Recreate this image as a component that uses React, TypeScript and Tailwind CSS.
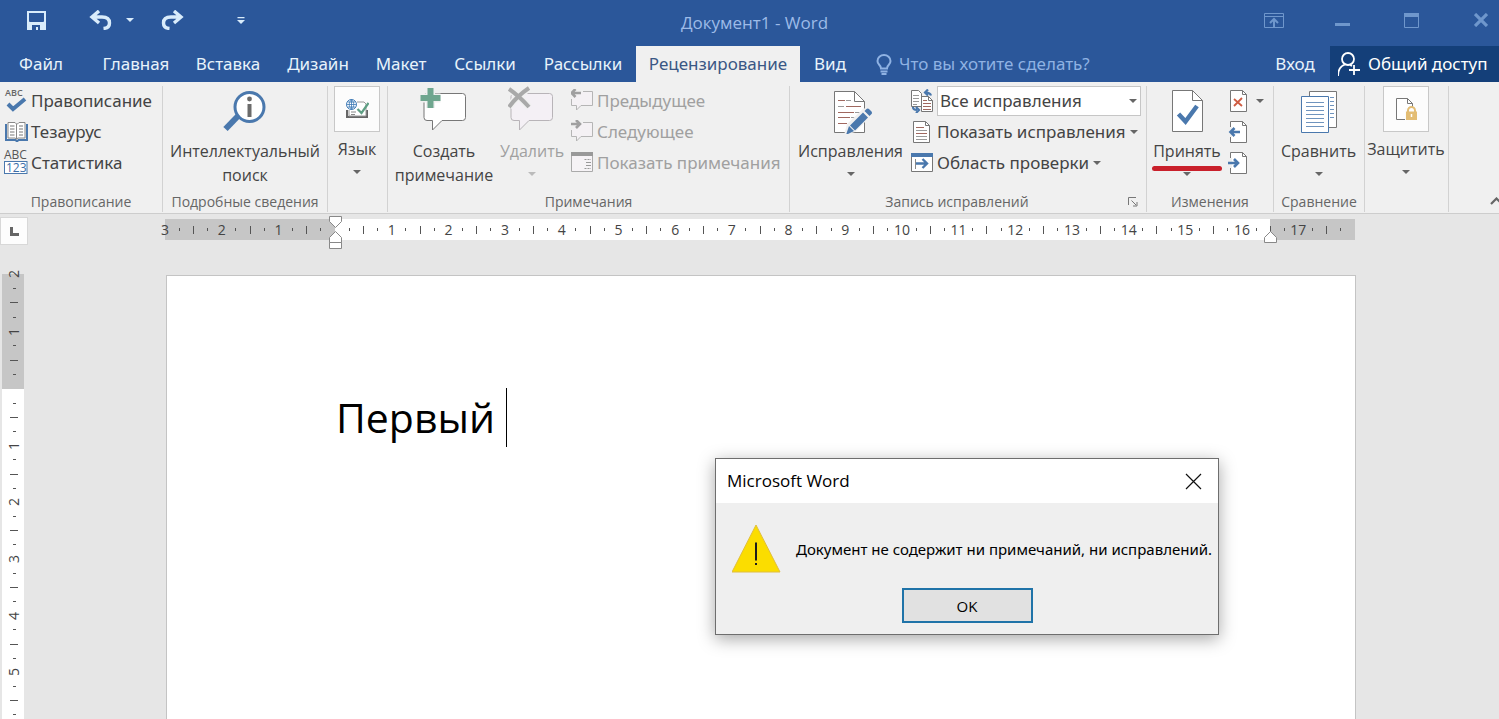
import type { ReactNode } from 'react';

/* ---------- shared pieces ---------- */

function Caret({ className = 'text-[#666]' }: { className?: string }) {
  return (
    <svg width="8" height="4" viewBox="0 0 8 4" className={`shrink-0 ${className}`} aria-hidden="true">
      <path d="M0 0h8L4 4z" fill="currentColor" />
    </svg>
  );
}

function Group({ label, width, children, launcher }: { label?: string; width: string; children: ReactNode; launcher?: boolean }) {
  return (
    <section className={`flex shrink-0 flex-col pt-1 ${width}`}>
      <div className="flex h-[126px] flex-col border-r border-[#d2d2d2]">
        <div className="flex h-[106px] shrink-0">{children}</div>
        <div className="flex h-5 items-center justify-center text-[14px] leading-5 whitespace-nowrap text-[#666]">
          <h2 className={launcher ? 'flex-1 pr-1 text-center' : 'flex-1 text-center'}>{label}</h2>
          {launcher && (
            <button aria-label="Параметры" className="w-[18px]">
              <svg width="10" height="10" viewBox="0 0 10 10" fill="none" stroke="#777">
                <path d="M.5 8V.5H8M3.500 3.500 8 8M9 5v4H5" />
              </svg>
            </button>
          )}
        </div>
      </div>
    </section>
  );
}

function BigButton({ icon, lines, width, muted, caret }: { icon: ReactNode; lines: string[]; width: string; muted?: boolean; caret?: boolean }) {
  return (
    <button disabled={muted} className={`flex shrink-0 flex-col items-center text-base leading-6 whitespace-nowrap ${width} ${muted ? 'text-[#a0a0a0]' : 'text-[#444]'}`}>
      <span className="flex h-[53px] shrink-0 items-start justify-center">{icon}</span>
      {lines.map((l) => (
        <span key={l}>{l}</span>
      ))}
      {caret && <Caret className={muted ? 'mt-[9px] text-[#bbb]' : 'mt-[9px] text-[#666]'} />}
    </button>
  );
}

function BoxedButton({ icon, text, width }: { icon: ReactNode; text: string; width: string }) {
  return (
    <button className={`flex shrink-0 flex-col items-center text-base leading-6 whitespace-nowrap text-[#444] ${width}`}>
      <span className="flex size-[46px] shrink-0 items-center justify-center border border-[#c8c8c8] bg-[#fcfcfc]">{icon}</span>
      <span className="mt-[5px]">{text}</span>
      <Caret className="mt-[9px] text-[#666]" />
    </button>
  );
}

function SmallButton({ icon, text, muted, caret }: { icon: ReactNode; text: string; muted?: boolean; caret?: boolean }) {
  return (
    <button disabled={muted} className={`flex h-[31px] items-center font-['Noto_Sans',sans-serif] text-[17px] leading-6 whitespace-nowrap ${muted ? 'text-[#a0a0a0]' : 'text-[#444]'}`}>
      <span className="flex w-[26px] shrink-0">{icon}</span>
      <span>{text}</span>
      {caret && <Caret className="ml-1 text-[#666]" />}
    </button>
  );
}

/* ---------- icons ---------- */

const SpellIcon = () => (
  <svg width="24" height="26" viewBox="0 0 24 26" className="overflow-visible" aria-hidden="true">
    <text x="0" y="8" fontSize="9" fontWeight="600" fill="#666" fontFamily="Open Sans, sans-serif">ABC</text>
    <path d="m3 16 5 5L20 11" fill="none" stroke="#4a78ad" strokeWidth="4" />
  </svg>
);

const BookIcon = () => (
  <svg width="24" height="22" viewBox="1 0 24 22" fill="none" aria-hidden="true">
    <path d="M2 3v16h9.500l1 1h1l1-1H23V3" stroke="#4a78ad" strokeWidth="2" />
    <path d="M4 1.500h7l1.500 1.500v15L11 17H4zM21 1.500h-6L13.500 3 12.500 3v15l1.500-1h7z" fill="#fff" stroke="#888" />
    <path d="M6 5h4.500M6 8h4.500M6 11h4.500M6 14h4.500M15 5h4M15 8h4M15 11h4M15 14h4" stroke="#777" />
  </svg>
);

const CountIcon = () => (
  <svg width="24" height="26" viewBox="1 0 24 26" className="overflow-visible" aria-hidden="true">
    <text x="0" y="9" fontSize="12" fill="#555" fontFamily="Open Sans, sans-serif">ABC</text>
    <rect x=".5" y="11.500" width="22.500" height="12" fill="#fff" stroke="#4a78ad" />
    <text x="2" y="22" fontSize="12" fill="#3d6ea8" fontFamily="Open Sans, sans-serif">123</text>
  </svg>
);

const LookupIcon = () => (
  <svg width="44" height="46" viewBox="1 0 44 46" fill="none" aria-hidden="true">
    <path d="M17 29 3.500 43" stroke="#4a78ad" strokeWidth="6" />
    <circle cx="27.500" cy="21" r="14.500" fill="#fff" stroke="#4a78ad" strokeWidth="3" />
    <circle cx="27.500" cy="13" r="2.400" fill="#6b6b6b" />
    <path d="M27.500 18v13" stroke="#6b6b6b" strokeWidth="4" />
  </svg>
);

const LanguageIcon = () => (
  <svg width="24" height="22" viewBox="0 0 24 22" fill="none" aria-hidden="true">
    <path d="M2 12v7h20v-7" stroke="#666" strokeWidth="2" />
    <path d="M12 4h7l2 2v12H4v-6" fill="#fff" stroke="#999" />
    <path d="M6 14h5M6 16.500h4" stroke="#888" />
    <circle cx="6.500" cy="6.500" r="5" fill="#fff" stroke="#3b78b5" />
    <path d="M6.500 1.500v10M1.500 6.500h10M2.500 4h8M2.500 9h8M6.500 1.500c-3 3-3 7 0 10M6.500 1.500c3 3 3 7 0 10" stroke="#3b78b5" strokeWidth=".8" />
    <path d="m12.500 11 4 4 7-10" stroke="#5f9f84" strokeWidth="2.200" />
  </svg>
);

const bubble = 'M4.500 .5h36q3 0 3 3v21q0 3-3 3H20l-9.500 9.500v-9.500H5q-3 0-3-3v-21q0-3 3-3z';

const NewCommentIcon = () => (
  <svg width="48" height="46" viewBox="0 0 48 46" fill="none" aria-hidden="true">
    <g transform="translate(2 7)"><path d={bubble} fill="#fff" stroke="#777" /></g>
    <path d="M10.500 2v20M.500 12h20" stroke="#f0f0f0" strokeWidth="9" />
    <path d="M10.500 2v20M.500 12h20" stroke="#6fa68f" strokeWidth="6" />
  </svg>
);

const DeleteCommentIcon = () => (
  <svg width="48" height="46" viewBox="1 0 48 46" fill="none" aria-hidden="true">
    <g transform="translate(2 7)"><path d={bubble} fill="#f4f0f5" stroke="#b8b4b8" /></g>
    <path d="M2 3q10 7 20 18M22 2Q10 10 2 21" stroke="#f0f0f0" strokeWidth="7" />
    <path d="M2 3q10 7 20 18M22 2Q10 10 2 21" stroke="#a9a9a9" strokeWidth="4" />
  </svg>
);

const StepCommentIcon = ({ next }: { next?: boolean }) => (
  <svg width="24" height="24" viewBox="1 1 24 24" fill="none" aria-hidden="true">
    <path d="M13 3.500h9.500v14H11L6.500 22v-4.500H1.500V11" fill="#f4f1f4" stroke="#b5b5b5" />
    <path d={next ? 'M0 5h9M6 1l4 4-4 4' : 'M11 5H2M5.500 1l-4 4 4 4'} stroke="#a0a0a0" strokeWidth="2.600" />
  </svg>
);

const ShowCommentsIcon = () => (
  <svg width="24" height="22" viewBox="1 1 24 22" fill="none" aria-hidden="true">
    <path d="M1.500 1.500h21v19h-21z" fill="#f6f3f6" stroke="#aaa" />
    <path d="M1 3h22" stroke="#999" strokeWidth="4" />
    <path d="M14.500 8.500H21M14.500 17.500H21" stroke="#999" strokeDasharray="2 1" />
    <path d="M16 11.500h5M16 14.500h5" stroke="#999" />
  </svg>
);

const TrackIcon = () => (
  <svg width="42" height="48" viewBox="0 0 42 48" fill="none" aria-hidden="true">
    <path d="M4.500 5.500h20l10 10v31h-30z" fill="#fff" stroke="#777" />
    <path d="M24.500 5.500v10h10" stroke="#777" />
    <path d="M8 14.500h7M16 20.500h15M8 26.500h16M8 31.500h12M8 37.500h9" stroke="#a0685f" />
    <path d="M16 14.500h5M8 20.500h6M25 26.500h6M21 31.500h5" stroke="#999" />
    <path d="m14 49 3-11 17-16 8 7-17 17z" fill="#f0f0f0" />
    <path d="m16 49 3-9 5 5zM20 39.500l13-13 5 5-13 13zM34.500 25l2-2q1.500-1 3 .5l2 2q1 1.500 0 2.500l-2 2z" fill="#4a78ad" />
  </svg>
);

const MarkupIcon = () => (
  <svg width="24" height="24" viewBox="1 0 24 24" fill="none" aria-hidden="true">
    <path d="M1.500 1.500h7l3 3v13h-10z" fill="#fff" stroke="#777" />
    <path d="M3 6.500h6M3 9.500h6M3 12.500h6M3 15.500h4" stroke="#999" />
    <path d="M11.500 7.500h7l4 4v11h-11z" fill="#fff" stroke="#777" />
    <path d="M18.500 7.500v4h4" stroke="#777" />
    <path d="M13 11.500h4M13 14.500h8M13 17.500h8M13 20.500h8" stroke="#a0685f" />
    <path d="M21 6.500q-1-3-5-3M18 .500l-3 3 3 3M3 18q0 3 4 3M6 18l3 3-3 3" stroke="#4a78ad" strokeWidth="2.200" />
  </svg>
);

const ShowMarkupIcon = () => (
  <svg width="24" height="22" viewBox="1 0 24 22" fill="none" aria-hidden="true">
    <path d="M3.500.5h12l4 4v17h-16z" fill="#fff" stroke="#777" />
    <path d="M15.500.5v4h4" stroke="#777" />
    <path d="M6 6.500h8M6 12.500h11" stroke="#a0685f" />
    <path d="M6 9.500h11M6 15.500h11M6 18.500h11" stroke="#999" />
  </svg>
);

const PaneIcon = () => (
  <svg width="24" height="20" viewBox="1 1 24 20" fill="none" aria-hidden="true">
    <path d="M1.500.5h21v19h-21z" fill="#fff" stroke="#777" />
    <path d="M1 2.500h22" stroke="#4a78ad" strokeWidth="5" />
    <path d="M5.500 7v10" stroke="#888" />
    <path d="M6 11.500h11M12.500 7l4.500 4.500-4.500 4.500" stroke="#4a78ad" strokeWidth="2.400" />
  </svg>
);

const AcceptIcon = () => (
  <svg width="32" height="47" viewBox="0 0 32 47" fill="none" aria-hidden="true">
    <path d="M1.500 4.500h20l10 10v31h-30z" fill="#fff" stroke="#777" />
    <path d="M21.500 4.500v10h10" stroke="#777" />
    <path d="m7.500 28 7 7.500L26 20" stroke="#4a78ad" strokeWidth="4.500" />
  </svg>
);

const PageGlyph = ({ children }: { children: ReactNode }) => (
  <svg width="20" height="22" viewBox="0 0 20 22" fill="none" aria-hidden="true">
    <path d="M3.500.5h12l4 4v17h-16z" fill="#fff" stroke="#777" />
    <path d="M15.500.5v4h4" stroke="#777" />
    {children}
  </svg>
);

const CompareIcon = () => (
  <svg width="38" height="47" viewBox="0 0 38 47" fill="none" aria-hidden="true">
    <path d="M9.500 5.500h27v36h-27z" fill="#fff" stroke="#777" />
    <path d="M30 11.500h4M30 15.500h4M30 19.500h4M30 23.500h4M30 27.500h4M30 31.500h4" stroke="#6f94be" />
    <path d="M1.500 10.500h27v36h-27z" fill="#fff" stroke="#4a78ad" />
    <path d="M6 16.500h18M6 20.500h18M6 24.500h18M6 28.500h18M6 32.500h18M6 36.500h18M6 40.500h18" stroke="#6f94be" />
  </svg>
);

const ProtectIcon = () => (
  <svg width="24" height="24" viewBox="0 0 24 24" fill="none" aria-hidden="true">
    <path d="M2.500 1.500h11l5 5v16h-16z" fill="#fff" stroke="#777" />
    <path d="M13.500 1.500v5h5" stroke="#777" />
    <path d="M11 11h13v13H11z" fill="#fcfcfc" />
    <path d="M14 15v-1.500a3.500 3.500 0 0 1 7 0V15" stroke="#e3bd74" strokeWidth="2" />
    <path d="M12 14.500h11V23H12z" fill="#e3bd74" />
    <path d="M17.500 17v3" stroke="#fff" strokeWidth="1.500" />
  </svg>
);

/* ---------- header ---------- */

function TitleBar() {
  return (
    <div className="flex h-[46px] items-center justify-between text-[#d9ecfb]">
      <div className="flex w-[250px] items-center pb-1.5 pl-[27px]">
        <button aria-label="Сохранить">
          <svg width="19" height="19" viewBox="0 0 19 19" aria-hidden="true">
            <path d="M0 0h19v19H0zM2 2v8q0 1 1 1h13q1 0 1-1V2z" fill="currentColor" fillRule="evenodd" />
            <path d="M5 14h8v5h-2v-3H9v3H5z" fill="#2b579a" />
          </svg>
        </button>
        <button aria-label="Отменить" className="ml-[43px]">
          <svg width="23" height="20" viewBox="0 0 23 20" fill="none" stroke="currentColor" strokeWidth="3.400" aria-hidden="true">
            <path d="M10 1 3 7l7 6M3.500 7H13q7.500 0 7.500 6 0 5-6 5.500" />
          </svg>
        </button>
        <button aria-label="Список отмены" className="ml-[14px]"><Caret className="text-[#d9ecfb]" /></button>
        <button aria-label="Повторить" className="ml-[27px]">
          <svg width="23" height="20" viewBox="0 0 23 20" fill="none" stroke="currentColor" strokeWidth="3.400" aria-hidden="true">
            <path d="m13 1 7 6-7 6M19.500 7H10q-7.500 0-7.500 6 0 5 6 5.500" />
          </svg>
        </button>
        <button aria-label="Настройка панели" className="ml-[53px]">
          <svg width="8" height="7" viewBox="0 0 8 7" aria-hidden="true">
            <path d="M.5 0h7v1.200h-7zM0 3h8L4 7z" fill="currentColor" />
          </svg>
        </button>
      </div>
      <h1 className="text-[17px] leading-6 whitespace-nowrap text-[#9dbbe8]">Документ1 - Word</h1>
      <div className="flex w-[240px] items-center justify-end pr-[11px] pb-1.5 text-[#6f97cc]">
        <button aria-label="Параметры ленты">
          <svg width="20" height="15" viewBox="0 0 20 15" fill="none" stroke="currentColor" aria-hidden="true">
            <path d="M.5.5h19v14H.5zM.5 3.500h19" />
            <path d="M10 14V6M6 10l4-4 4 4" strokeWidth="2" />
          </svg>
        </button>
        <button aria-label="Свернуть" className="ml-[51px]"><svg width="15" height="15" viewBox="0 0 15 15" aria-hidden="true"><path d="M0 10h15v3H0z" fill="currentColor" /></svg></button>
        <button aria-label="Развернуть" className="ml-[54px]"><svg width="15" height="15" viewBox="0 0 15 15" fill="none" stroke="currentColor" aria-hidden="true"><path d="M.5.5h14v14H.5z" /><path d="M0 2h15" strokeWidth="4" /></svg></button>
        <button aria-label="Закрыть" className="ml-[55px]"><svg width="14" height="14" viewBox="0 0 14 14" stroke="currentColor" strokeWidth="3.200" aria-hidden="true"><path d="m1 1 12 12M13 1 1 13" /></svg></button>
      </div>
    </div>
  );
}

const tabs: [string, string][] = [
  ['Файл', 'w-[82px]'],
  ['Главная', 'w-[108px]'],
  ['Вставка', 'w-[76px]'],
  ['Дизайн', 'w-[104px]'],
  ['Макет', 'w-[62px]'],
  ['Ссылки', 'w-[106px]'],
  ['Рассылки', 'w-[98px] pr-2'],
  ['Рецензирование', 'w-[164px]'],
  ['Вид', 'w-[60px]'],
];

function TabRow() {
  return (
    <div className="flex h-9 items-stretch font-['Noto_Sans',sans-serif] text-[17px] leading-6 whitespace-nowrap text-[#e8f3fb]">
      <nav className="flex shrink-0">
        {tabs.map(([t, w]) => (
          <button key={t} className={`${w} ${t === 'Рецензирование' ? 'bg-[#f0f0f0] text-[#3a5784]' : ''}`}>{t}</button>
        ))}
      </nav>
      <label className="flex flex-1 items-center pl-4 text-[#8fb2e3]">
        <svg width="16" height="21" viewBox="0 0 16 21" fill="none" stroke="currentColor" strokeWidth="2" aria-hidden="true">
          <path d="M5 14.500q0-2-2-4-1.500-1.500-1.500-3.500a6.500 6 0 0 1 13 0q0 2-1.500 3.500-2 2-2 4zM4.500 17.500h7M5.500 20h5" />
        </svg>
        <input aria-label="Что вы хотите сделать?" placeholder="Что вы хотите сделать?" className="ml-[7px] w-[220px] bg-transparent outline-none placeholder:text-[#8fb2e3]" />
      </label>
      <button className="w-[70px]">Вход</button>
      <button className="flex w-[169px] items-center gap-[7px] bg-[#143f79] pl-2 text-white">
        <svg width="23" height="24" viewBox="1 0 23 24" fill="none" stroke="currentColor" strokeWidth="1.800" aria-hidden="true" className="shrink-0">
          <circle cx="11" cy="7" r="6" />
          <path d="M1 24q0-9 7-11.500M13 13l2 1M17 13v10M12 18h11" />
        </svg>
        Общий доступ
      </button>
    </div>
  );
}

/* ---------- ribbon ---------- */

function Ribbon() {
  return (
    <div className="flex h-[132px] shrink-0 border-b border-[#cdcdcd] bg-[#f0f0f0]">
      <Group label="Правописание" width="w-[163px]">
        <div className="-mt-px flex flex-col pl-[5px]">
          <SmallButton icon={<SpellIcon />} text="Правописание" />
          <SmallButton icon={<BookIcon />} text="Тезаурус" />
          <SmallButton icon={<CountIcon />} text="Статистика" />
        </div>
      </Group>
      <Group label="Подробные сведения" width="w-[165px]">
        <BigButton icon={<LookupIcon />} lines={['Интеллектуальный', 'поиск']} width="w-[164px]" />
      </Group>
      <Group width="w-[60px]">
        <BoxedButton icon={<LanguageIcon />} text="Язык" width="w-[58px]" />
      </Group>
      <Group label="Примечания" width="w-[402px]">
        <BigButton icon={<NewCommentIcon />} lines={['Создать', 'примечание']} width="w-[112px]" />
        <BigButton icon={<DeleteCommentIcon />} lines={['Удалить']} width="w-[64px]" muted caret />
        <div className="-mt-px flex flex-col pl-[7px]">
          <SmallButton icon={<StepCommentIcon />} text="Предыдущее" muted />
          <SmallButton icon={<StepCommentIcon next />} text="Следующее" muted />
          <SmallButton icon={<ShowCommentsIcon />} text="Показать примечания" muted />
        </div>
      </Group>
      <Group label="Запись исправлений" width="w-[357px]" launcher>
        <BigButton icon={<TrackIcon />} lines={['Исправления']} width="w-[121px]" caret />
        <div className="-mt-px flex flex-col">
          <label className="flex h-[31px] items-center">
            <span className="w-[26px]"><MarkupIcon /></span>
            <span className="relative flex items-center">
              <select aria-label="Показ исправлений" className="h-[30px] w-[204px] appearance-none border border-[#c6c6c6] bg-white pl-[2px] font-['Noto_Sans',sans-serif] text-[17px] leading-6 text-[#444]">
                <option>Все исправления</option>
              </select>
              <span className="pointer-events-none absolute right-1"><Caret /></span>
            </span>
          </label>
          <SmallButton icon={<ShowMarkupIcon />} text="Показать исправления" caret />
          <SmallButton icon={<PaneIcon />} text="Область проверки" caret />
        </div>
      </Group>
      <Group label="Изменения" width="w-[127px]">
        <div className="relative flex">
          <BigButton icon={<AcceptIcon />} lines={['Принять']} width="w-[80px]" caret />
          <span className="absolute top-20 left-[5px] h-[5px] w-[70px] rounded-full bg-[#c9202b]" />
        </div>
        <div className="-mt-px flex flex-col">
          <button aria-label="Отклонить" className="flex h-[31px] items-center gap-[9px]">
            <PageGlyph><path d="m7 9 8 7M15 8l-8 8" stroke="#cf5c42" strokeWidth="1.800" /></PageGlyph>
            <Caret />
          </button>
          <button aria-label="Назад" className="flex h-[31px] items-center">
            <PageGlyph>
              <path d="M0 6h5v10H0z" fill="#f0f0f0" />
              <path d="M13 11H3M7.500 7l-4 4 4 4" stroke="#4a78ad" strokeWidth="2.600" />
            </PageGlyph>
          </button>
          <button aria-label="Далее" className="flex h-[31px] items-center">
            <PageGlyph>
              <path d="M0 6h5v10H0z" fill="#f0f0f0" />
              <path d="M1 11h10M7 7l4 4-4 4" stroke="#4a78ad" strokeWidth="2.600" />
            </PageGlyph>
          </button>
        </div>
      </Group>
      <Group label="Сравнение" width="w-[91px]">
        <BigButton icon={<CompareIcon />} lines={['Сравнить']} width="w-[89px]" caret />
      </Group>
      <Group width="w-[84px]">
        <BoxedButton icon={<ProtectIcon />} text="Защитить" width="w-[82px]" />
      </Group>
      <div className="flex flex-1 items-end justify-end overflow-hidden pb-2">
        <button aria-label="Свернуть ленту" className="-mr-1">
          <svg width="13" height="8" viewBox="0 0 13 8" fill="none" stroke="#666" strokeWidth="2.200" aria-hidden="true"><path d="m1 7 5.500-5.500L12 7" /></svg>
        </button>
      </div>
    </div>
  );
}

/* ---------- rulers: quarter-centimetre steps ---------- */

function Slots({ from, count, vertical }: { from: number; count: number; vertical?: boolean }) {
  return (
    <>
      {Array.from({ length: count }, (_, i) => {
        const q = from + i;
        const whole = q % 4 === 0;
        const half = q % 2 === 0;
        return vertical ? (
          <span key={q} className="flex h-0 w-full flex-1 justify-center">
            <span className="flex h-0 items-center">
              {whole ? <span className="-rotate-90">{q === 0 ? '' : Math.abs(q / 4)}</span> : <i className={half ? 'h-px w-2 bg-[#555]' : 'h-px w-[3px] bg-[#555]'} />}
            </span>
          </span>
        ) : (
          <span key={q} className="flex h-full w-0 flex-1">
            <span className="flex w-0 items-center justify-center">
              {whole ? <span>{q === 0 ? '' : Math.abs(q / 4)}</span> : <i className={half ? 'h-2 w-px shrink-0 bg-[#555]' : 'h-[3px] w-px shrink-0 bg-[#555]'} />}
            </span>
          </span>
        );
      })}
    </>
  );
}

function HorizontalRuler() {
  return (
    <div className="mr-[144px] ml-[165px] flex h-[21px] text-[14px] leading-5 text-[#444]">
      <div className="flex grow-[12] basis-0 bg-[#c6c6c6]"><Slots from={-12} count={12} /></div>
      <div className="relative flex grow-[66] basis-0 bg-white">
        <Slots from={0} count={66} />
        <svg width="14" height="34" viewBox="0 0 14 34" fill="#fff" stroke="#888" className="absolute -top-[3px] -left-[6px]" aria-hidden="true">
          <path d="M.5.500h12v5l-6 6-6-6zM6.500 15.500l6 6v5H.5v-5zM.5 26.500h12v6H.5z" />
        </svg>
      </div>
      <div className="relative flex grow-[6] basis-0 bg-[#c6c6c6]">
        <Slots from={66} count={6} />
        <svg width="14" height="12" viewBox="0 0 14 12" fill="#fff" stroke="#888" className="absolute top-3 -left-[6px]" aria-hidden="true">
          <path d="m6.500.500 6 6v5H.5v-5z" />
        </svg>
      </div>
    </div>
  );
}

function VerticalRuler() {
  return (
    <div className="absolute top-[60px] left-[2px] flex w-[22px] flex-col text-[14px] leading-5 text-[#444]">
      <div className="flex h-[115px] flex-col bg-[#c6c6c6] pl-0.5"><Slots from={-8} count={8} vertical /></div>
      <div className="flex h-[340px] flex-col bg-white pl-0.5"><Slots from={0} count={24} vertical /></div>
    </div>
  );
}

/* ---------- dialog ---------- */

function MessageBox() {
  return (
    <div role="dialog" aria-label="Microsoft Word" className="absolute top-[458px] left-[715px] w-[504px] border border-[#6e6e6e] bg-[#efefef] text-black shadow-[0_4px_16px_rgba(0,0,0,0.35)]">
      <div className="flex h-11 items-center justify-between bg-white pr-4 pl-[11px]">
        <h2 className="text-[17px] leading-6">Microsoft Word</h2>
        <button aria-label="Закрыть">
          <svg width="17" height="17" viewBox="0 0 17 17" stroke="#111" strokeWidth="1.200" aria-hidden="true"><path d="m1 1 15 15M16 1 1 16" /></svg>
        </button>
      </div>
      <div className="flex items-center gap-[15px] pt-[21px] pl-4">
        <svg width="49" height="49" viewBox="0 0 49 49" aria-hidden="true" className="shrink-0">
          <path d="M24 1 48 48H0z" fill="#fbdd00" stroke="#e0be3c" />
          <path d="M23 18.500h2v18h-2zM23 39h2v2h-2z" fill="#1c1c1c" />
        </svg>
        <p className="font-['Noto_Sans',sans-serif] text-[15px] leading-6 whitespace-nowrap">Документ не содержит ни примечаний, ни исправлений.</p>
      </div>
      <div className="flex justify-center pt-[15px] pb-[11px]">
        <button className="h-[35px] w-[131px] border-2 border-[#1f73a8] bg-[#e1e1e1] text-[15px] leading-6">OK</button>
      </div>
    </div>
  );
}

export default function App() {
  return (
    <div className="relative flex h-screen flex-col overflow-hidden bg-[#e6e6e6] font-['Open_Sans','Noto_Sans',sans-serif]">
      <header className="shrink-0 bg-[#2b579a]">
        <TitleBar />
        <TabRow />
      </header>
      <Ribbon />
      <main className="relative flex flex-1 flex-col overflow-hidden pt-[5px]">
        <HorizontalRuler />
        <button aria-label="Табуляция" className="absolute top-[3px] left-0 flex h-7 w-7 items-center justify-center border border-[#d8d8d8] bg-[#fdfdfd]">
          <svg width="9" height="9" viewBox="0 0 9 9" aria-hidden="true"><path d="M0 0h3v6h6v3H0z" fill="#666" /></svg>
        </button>
        <VerticalRuler />
        <article className="mt-[35px] mr-[143px] ml-[166px] flex-1 border border-b-0 border-[#c4c4c4] bg-white pt-[111px] pl-[169px] text-black">
          <p className="flex items-center text-[41px] leading-[60px] font-medium">
            Первый
            <span className="ml-[11px] h-[59px] w-px bg-black" />
          </p>
        </article>
      </main>
      <MessageBox />
    </div>
  );
}
